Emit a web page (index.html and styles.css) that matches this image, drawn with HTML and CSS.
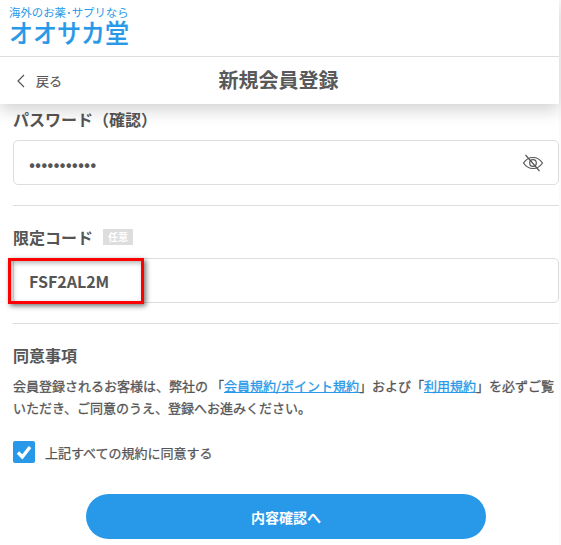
FILE: index.html
```html
<!DOCTYPE html>
<html lang="ja">
<head>
<meta charset="utf-8">
<title>新規会員登録</title>
<link rel="stylesheet" href="styles.css">
</head>
<body>
<div class="page">
  <header class="header">
    <div class="logo">
      <div class="logo-sub">海外のお薬･サプリなら</div>
      <div class="logo-main">オオサカ堂</div>
    </div>
    <nav class="nav">
      <a class="back">
        <svg class="back-icon" viewBox="0 0 10 14" width="10" height="14"><path d="M8 1 2 7l6 6" fill="none" stroke="#555" stroke-width="1.2"/></svg>
        <span>戻る</span>
      </a>
      <h1 class="title">新規会員登録</h1>
    </nav>
  </header>
  <main class="content">
    <section class="field first">
      <label class="label">パスワード（確認）</label>
      <div class="input">
        <span class="dots">•••••••••••</span>
        <svg class="eye" viewBox="0 0 22 20" width="22" height="20"><g fill="none" stroke="#555" stroke-width="1.2"><path d="M1.5 10C4 6.3 7.300 4.500 11 4.500S18 6.300 20.500 10C18 13.700 14.700 15.500 11 15.500S4 13.700 1.500 10Z"/><circle cx="11" cy="10" r="3.300"/><path d="M3.500 2 17.500 18"/></g></svg>
      </div>
    </section>
    <section class="field">
      <div class="label-row"><label class="label">限定コード</label><span class="badge">任意</span></div>
      <div class="input code-wrap">
        <span class="code">FSF2AL2M</span>
        <span class="highlight"></span>
      </div>
    </section>
    <section class="agree">
      <h2 class="label">同意事項</h2>
      <p class="terms">会員登録されるお客様は、弊社の 「<a>会員規約/ポイント規約</a>」および「<a>利用規約</a>」を必ずご覧いただき、ご同意のうえ、登録へお進みください。</p>
      <div class="check-row">
        <span class="check"><svg viewBox="0 0 22 22" width="22" height="22"><path d="M5 11.500 9.300 16 17 6" fill="none" stroke="#fff" stroke-width="3.400"/></svg></span>
        <span class="check-label">上記すべての規約に同意する</span>
      </div>
      <button class="submit">内容確認へ</button>
    </section>
  </main>
</div>
</body>
</html>
```
FILE: styles.css
```css
* { box-sizing: border-box; }
html, body { margin: 0; padding: 0; height: 545px; overflow: hidden; background: #fafafa; }
body { font-family: "Noto Sans CJK JP", "Noto Sans", sans-serif; color: #555; }
.page { width: 559px; height: 545px; background: #fff; }
.header { position: relative; z-index: 2; background: #fff; box-shadow: 0 6px 16px rgba(0,0,0,.18); }
.logo { height: 57px; padding: 5px 0 0 9px; border-bottom: 1px solid #ddd; color: #2899e8; }
.logo-sub { font-size: 11.4px; line-height: 14px; white-space: nowrap; }
.logo-main { font-size: 24px; line-height: 27px; font-weight: 500; -webkit-text-stroke: .2px #2899e8; transform: scaleY(1.08); transform-origin: 0 90%; }
.nav { height: 47px; position: relative; display: flex; align-items: center; justify-content: center; padding-right: 2px; }
.back { position: absolute; left: 16px; top: 0; height: 47px; display: flex; align-items: center; gap: 10px; font-size: 13px; -webkit-text-stroke: .2px #555; }
.back-icon { display: block; }
.title { margin: 0; font-size: 20px; line-height: 28px; font-weight: 700; color: #595959; position: relative; top: -1px; }
.content { padding: 0 0 0 13px; margin-top: 3px; }
.field { padding-bottom: 20px; margin-bottom: 19px; border-bottom: 1px solid #ddd; }
.label { display: block; margin: 0; font-size: 16px; line-height: 24px; font-weight: 700; color: #555; }
.label-row { display: flex; align-items: center; gap: 10px; height: 24px; }
.input { height: 45px; margin-top: 9px; border: 1px solid #ddd; border-radius: 5px; display: flex; align-items: center; justify-content: space-between; padding: 0 14px 0 15px; position: relative; }
.dots { font-size: 18px; color: #555; }
.eye { display: block; }
.badge { display: block; width: 30px; height: 16px; font-size: 10px; line-height: 16px; text-align: center; font-weight: 700; color: #fff; background: #ddd; }
.code { font-size: 16px; font-weight: 700; color: #555; }
.highlight { position: absolute; left: -6px; top: -1px; width: 136px; height: 46px; border: 3px solid #f00; box-shadow: 2px 2px 5px rgba(0,0,0,.55), inset 2px 2px 5px rgba(0,0,0,.3); }
.terms { margin: 8px 0 0; font-size: 13px; line-height: 22px; -webkit-text-stroke: .3px #555; color: #555; padding-right: 2px; }
.terms a { color: #2899e8; -webkit-text-stroke: .3px #2899e8; text-decoration: underline; }
.check-row { display: flex; align-items: center; gap: 10px; margin-top: 22px; }
.check { width: 22px; height: 22px; border-radius: 2px; background: #2899e8; display: block; }
.check svg { display: block; }
.check-label { font-size: 13px; -webkit-text-stroke: .25px #555; color: #555; }
.submit { display: block; width: 400px; height: 45px; margin: 31px 0 0 73px; border: 0; border-radius: 23px; background: #2899e8; color: #fff; font: 700 14px "Noto Sans CJK JP", sans-serif; }
```
